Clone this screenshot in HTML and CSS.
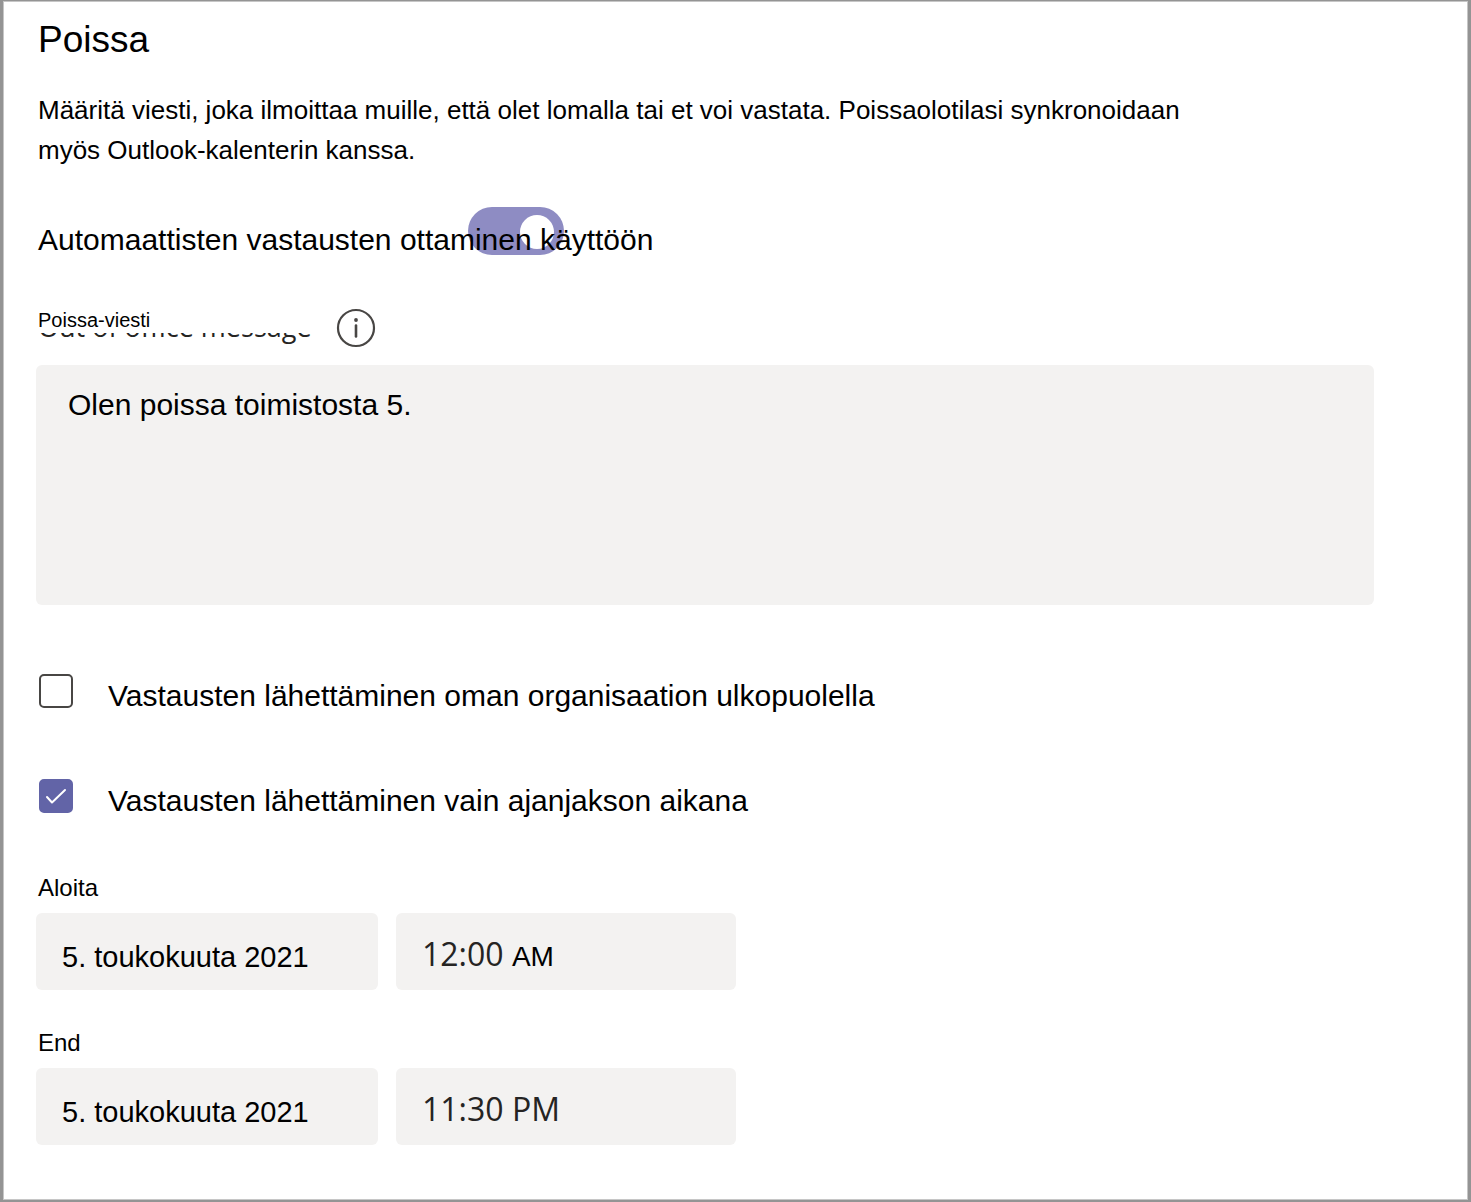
FILE: index.html
```html
<!DOCTYPE html>
<html lang="fi">
<head>
<meta charset="UTF-8" />
<meta name="viewport" content="width=device-width, initial-scale=1" />
<title>Poissa</title>
<link rel="stylesheet" href="styles.css">
</head>
<body>
  <form class="panel">
    <h1>Poissa</h1>
    <p class="intro">Määritä viesti, joka ilmoittaa muille, että olet lomalla tai et voi vastata. Poissaolotilasi synkronoidaan myös Outlook-kalenterin kanssa.</p>

    <div class="toggle-row">
      <input type="checkbox" role="switch" id="autoReply" class="toggle" checked />
      <label for="autoReply">Automaattisten vastausten ottaminen käyttöön</label>
    </div>

    <div class="message-head">
      <div class="message-title">
        <span class="message-original">Out of office message</span>
        <label class="message-label" for="message">Poissa-viesti</label>
      </div>
      <button type="button" class="info" aria-label="Info">
        <svg viewBox="0 0 40 40" width="40" height="40" fill="none" stroke="#484644">
          <circle cx="20" cy="20" r="18" stroke-width="2.2" />
          <path d="M20 17.5V28.5" stroke-width="2.6" stroke-linecap="round" />
          <circle cx="20" cy="12" r="1.9" fill="#484644" stroke="none" />
        </svg>
      </button>
    </div>
    <textarea id="message" class="message">Olen poissa toimistosta 5.</textarea>

    <div class="options">
      <div class="option">
        <input type="checkbox" id="outside" />
        <label for="outside">Vastausten lähettäminen oman organisaation ulkopuolella</label>
      </div>
      <div class="option">
        <input type="checkbox" id="period" checked />
        <label for="period">Vastausten lähettäminen vain ajanjakson aikana</label>
      </div>
    </div>

    <div class="period">
      <label class="period-label" for="startDate">Aloita</label>
      <div class="fields">
        <input type="text" id="startDate" class="field date" value="5. toukokuuta 2021" />
        <button type="button" class="field time">12:00 <span class="meridiem">AM</span></button>
      </div>
    </div>
    <div class="period">
      <label class="period-label" for="endDate">End</label>
      <div class="fields">
        <input type="text" id="endDate" class="field date" value="5. toukokuuta 2021" />
        <button type="button" class="field time">11:30 PM</button>
      </div>
    </div>
  </form>
</body>
</html>
```
FILE: styles.css
```css
* {
  box-sizing: border-box;
}
body {
  margin: 0;
  font-family: "Liberation Sans", Arial, sans-serif;
  font-size: 30px;
  color: #000; background: #fff;
}
.panel {
  min-height: 100vh;
  padding: 17px 94px 10px 33px;
  border: solid #949494;
  border-width: 1px 3px 2px;
  box-shadow: inset 0 0 0 1px #c6c6c6;
}
h1 {
  margin: 0 2px 28px;
  font-size: 37px; font-weight: 400; line-height: 44px;
}
.intro {
  max-width: 1160px; margin: 0 2px 50px;
  font-size: 26px; line-height: 40px;
}

/* switch */
.toggle-row {
  position: relative;
  margin: 0 2px 48px;
  line-height: 40px;
}
.toggle-row label {
  position: relative;
}
.toggle {
  appearance: none;
  position: absolute; left: 430px; top: -13px;
  width: 96px; height: 48px; margin: 0;
  border-radius: 24px; background: #8e8cc3;
}
.toggle::before {
  content: "";
  position: absolute; right: 10px; top: 8px;
  width: 34px; height: 34px;
  border-radius: 50%; background: #fff;
}
.toggle:not(:checked)::before {
  right: 52px;
}

/* message */
.message-head {
  display: flex; gap: 24px;
  margin: 0 2px 17px;
}
.message-title {
  position: relative;
}
.message-original {
  font-family: "Open Sans", sans-serif;
  font-size: 27px; line-height: 38px; color: #252423;
}
.message-label {
  position: absolute; left: 0; top: 0;
  width: 100%; background: #fff;
  font-size: 20px; line-height: 25px;
}
.info {
  width: 40px; height: 40px; padding: 0;
  border: none; background: none;
}
.info svg {
  display: block;
}
.message {
  display: block;
  width: 100%; height: 240px; padding: 20px 32px;
  border: none; border-radius: 6px; background: #f3f2f1;
  font: inherit; line-height: 40px; color: inherit;
  resize: none;
}

/* checkboxes */
.options {
  display: grid; gap: 61px;
  margin: 69px 3px 50px;
}
.option {
  display: flex; gap: 35px;
  line-height: 44px;
}
.option input {
  appearance: none;
  flex: none;
  width: 34px; height: 34px; margin: 0;
  border: 2px solid #484644; border-radius: 5px;
}
.option input:checked {
  border-color: #6264a7;
  background: #6264a7 url("data:image/svg+xml,%3Csvg xmlns='http://www.w3.org/2000/svg' viewBox='0 0 30 30' fill='none' stroke='%23fff' stroke-width='2' stroke-linecap='round' stroke-linejoin='round'%3E%3Cpath d='M6 16l5 5.500L24 9'/%3E%3C/svg%3E") center / 30px no-repeat;
}

/* dates */
.period {
  margin-bottom: 38px;
}
.period-label {
  display: block;
  margin: 0 2px 10px;
  font-size: 24px; line-height: 30px;
}
.fields {
  display: flex; gap: 18px;
}
.field {
  min-width: 0; height: 77px; padding: 0 26px;
  border: none; border-radius: 6px; background: #f3f2f1;
  text-align: left; color: inherit;
}
.date {
  flex: 0 1 342px;
  padding-top: 11px;
  font: inherit; font-size: 29px;
}
.time {
  flex: 0 1 340px;
  padding-top: 4px;
  font-family: "Open Sans", sans-serif; font-size: 32px;
  color: #252423;
}
.meridiem {
  font-family: "Liberation Sans", Arial, sans-serif;
  font-size: 28px; color: #000;
}
```
